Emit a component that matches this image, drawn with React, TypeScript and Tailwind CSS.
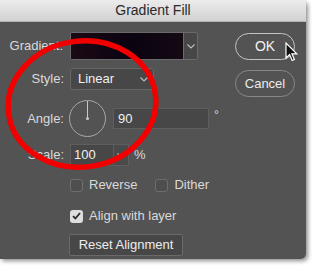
import React from 'react';

const Chevron: React.FC<{ className?: string }> = ({ className }) => (
  <svg className={className} width="8" height="5" viewBox="0 0 8 5" fill="none">
    <path d="M0.5 0.5L4 4L7.5 0.5" stroke="#bdbdbd" strokeWidth="1.1" />
  </svg>
);

const Check: React.FC<{ checked?: boolean; label: string }> = ({ checked, label }) => (
  <label className="flex items-center gap-[6px]">
    <span
      className={
        checked
          ? 'w-[13px] h-[13px] rounded-[3px] bg-[#dedede] flex items-center justify-center'
          : 'w-[13px] h-[13px] rounded-[3px] border border-[#6e6e6e] bg-[#4e4e4e]'
      }
    >
      {checked && (
        <svg width="9" height="8" viewBox="0 0 9 8" fill="none">
          <path d="M1 4.2L3.4 6.5L8 1" stroke="#2c2c2c" strokeWidth="1.8" />
        </svg>
      )}
    </span>
    <span>{label}</span>
  </label>
);

const App: React.FC = () => {
  return (
    <div className="relative w-[314px] h-[275px] bg-white overflow-hidden font-['Liberation_Sans',Arial,sans-serif] text-[13px] text-[#dadada]">
      {/* dialog window */}
      <div className="w-[306px] h-[259px] flex flex-col rounded-br-[5px] rounded-tr-[5px] overflow-hidden shadow-[2px_2px_4px_rgba(0,0,0,0.45)]">
        {/* title bar */}
        <div className="h-[22px] shrink-0 flex items-center justify-center bg-gradient-to-b from-[#ececec] to-[#d2d2d2] border-b border-[#b4b4b4] text-[#2a2a2a] text-[14px]">
          Gradient Fill
        </div>

        {/* body */}
        <div className="flex-1 bg-[#535353] flex">
          <div className="flex flex-col pt-[10px]">
            {/* gradient */}
            <div className="flex items-center h-[28px]">
              <span className="w-[64px] text-right pr-[1px]">Gradient:</span>
              <div className="ml-[6px] flex h-[28px] border border-[#6a6a6a] rounded-[2px]">
                <div className="w-[112px] h-full bg-gradient-to-r from-[#1c0a16] via-[#0b0310] to-[#140a14]" />
                <div className="w-[14px] h-full bg-[#474747] border-l border-[#6a6a6a] flex items-center justify-center">
                  <Chevron />
                </div>
              </div>
            </div>

            {/* style */}
            <div className="flex items-center h-[22px] mt-[8px]">
              <span className="w-[64px] text-right">Style:</span>
              <div className="ml-[6px] w-[84px] h-[22px] bg-[#474747] border border-[#666] rounded-[3px] flex items-center justify-between pl-[7px] pr-[5px]">
                <span className="text-[#f0f0f0]">Linear</span>
                <Chevron />
              </div>
            </div>

            {/* angle */}
            <div className="flex items-center h-[37px] mt-[10px]">
              <span className="w-[64px] text-right">Angle:</span>
              <div className="ml-[5px] w-[37px] h-[37px] rounded-full border border-[#a8a8a8] relative flex justify-center">
                <div className="w-px h-[17px] bg-[#c8c8c8]" />
                <div className="absolute left-[16px] top-[16px] w-[3px] h-[3px] rounded-full bg-[#c8c8c8]" />
              </div>
              <div className="ml-[7px] w-[96px] h-[21px] bg-[#474747] border border-[#5e5e5e] flex items-center pl-[4px] text-[#f0f0f0]">
                90
              </div>
              <span className="ml-[5px] -mt-[8px] text-[12px]">°</span>
            </div>

            {/* scale */}
            <div className="flex items-center h-[22px] mt-[7px]">
              <span className="w-[64px] text-right">Scale:</span>
              <div className="ml-[6px] flex h-[22px] border border-[#5e5e5e]">
                <div className="w-[42px] bg-[#474747] flex items-center pl-[3px] text-[#f0f0f0]">100</div>
                <div className="w-[15px] border-l border-[#5e5e5e] bg-[#4a4a4a] flex items-center justify-center">
                  <Chevron />
                </div>
              </div>
              <span className="ml-[5px]">%</span>
            </div>

            {/* checkboxes */}
            <div className="flex items-center h-[16px] mt-[11px] pl-[70px] gap-[18px]">
              <Check label="Reverse" />
              <Check label="Dither" />
            </div>
            <div className="flex items-center h-[16px] mt-[15px] pl-[70px]">
              <Check checked label="Align with layer" />
            </div>

            <div className="mt-[10px] pl-[69px]">
              <button className="w-[114px] h-[22px] bg-[#474747] border border-[#6a6a6a] rounded-[2px] text-[#ededed] text-[13px]">
                Reset Alignment
              </button>
            </div>
          </div>

          {/* action buttons */}
          <div className="ml-auto mr-[11px] pt-[11px] flex flex-col gap-[10px]">
            <button className="w-[60px] h-[27px] rounded-full border border-[#c4c4c4] text-[#f2f2f2] text-[14px]">OK</button>
            <button className="w-[60px] h-[27px] rounded-full border border-[#888] text-[#ececec] text-[13px]">Cancel</button>
          </div>
        </div>
      </div>

      {/* mouse cursor */}
      <svg className="absolute left-[285px] top-[42px]" width="14" height="20" viewBox="0 0 14 20">
        <path d="M1 1V16L4.6 12.6L7.2 18.5L9.4 17.5L6.9 11.8H11.8Z" fill="#111" stroke="#fff" strokeWidth="1.2" />
      </svg>

      {/* red annotation ellipse */}
      <svg className="absolute left-0 top-0 pointer-events-none" width="314" height="275">
        <ellipse cx="82" cy="104" rx="74" ry="63" fill="none" stroke="#f20000" strokeWidth="5.5" transform="rotate(-8 82 104)" />
      </svg>
    </div>
  );
};

export default App;
